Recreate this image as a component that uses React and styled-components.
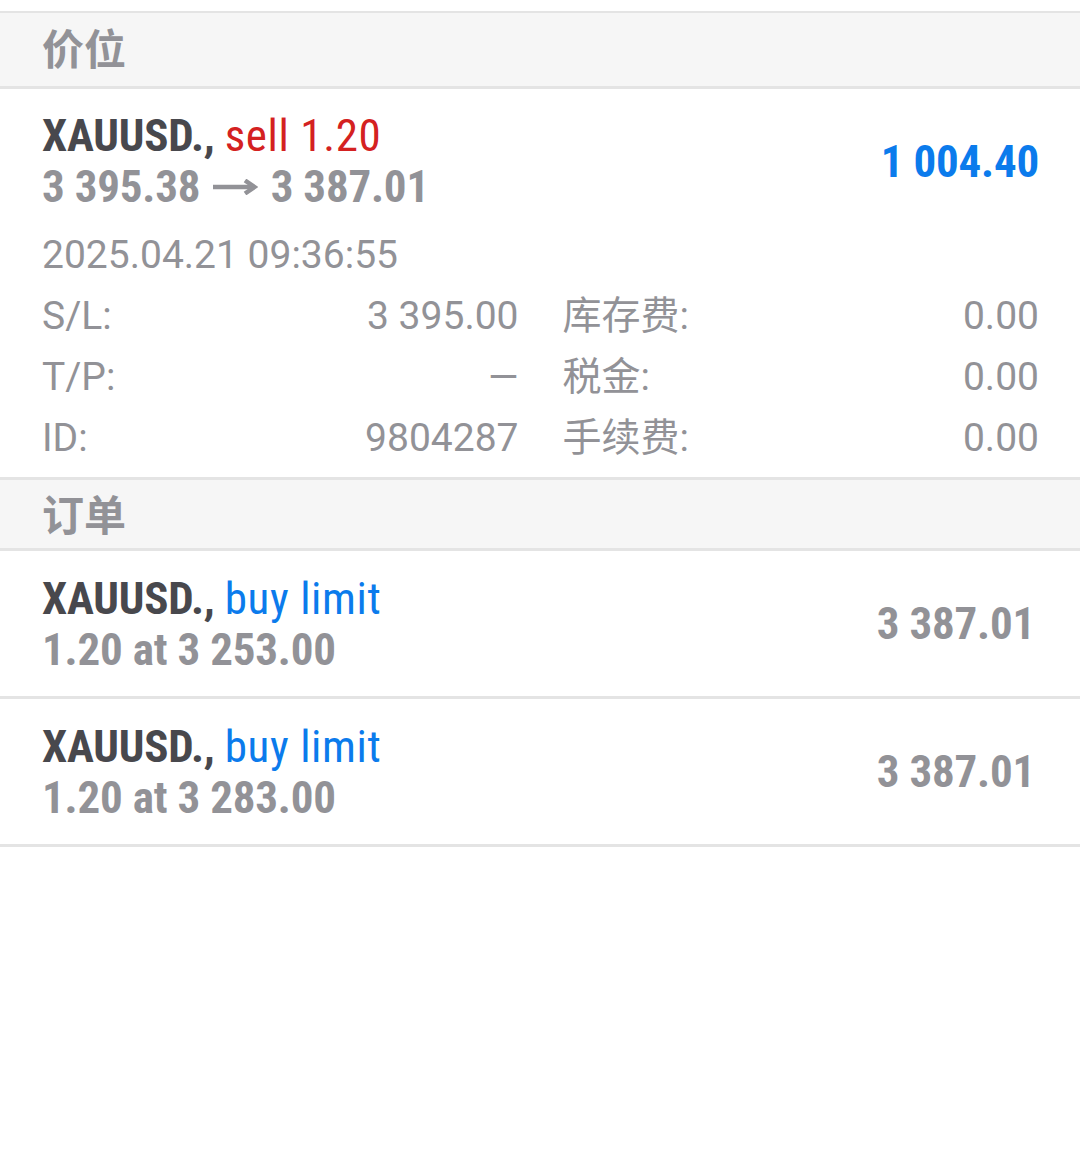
import React from "react";
import styled, { createGlobalStyle } from "styled-components";

const GlobalStyle = createGlobalStyle`
  html, body {
    margin: 0;
    padding: 0;
    background: #ffffff;
  }
  body {
    font-family: Roboto, "Noto Sans CJK SC", sans-serif;
    -webkit-font-smoothing: antialiased;
  }
`;

const C = {
  dark: "#48484d",
  gray: "#929297",
  red: "#d42121",
  blue: "#0b7bec",
  line: "#e4e4e4",
  headerBg: "#f6f6f6",
};

const Page = styled.div`
  width: 1080px;
  padding-top: 11px;
  background: #fff;
`;

const SectionHeader = styled.div`
  box-sizing: content-box;
  height: ${(p) => p.$h}px;
  border-top: ${(p) => p.$top}px solid ${C.line};
  border-bottom: 3px solid ${C.line};
  background: ${C.headerBg};
  padding: 0 42px ${(p) => p.$pb}px;
  display: flex;
  align-items: center;
  font-family: "Noto Sans CJK SC", sans-serif;
  font-weight: 700;
  font-size: 42px;
  line-height: 50px;
  color: ${C.gray};
`;

const PositionRow = styled.div`
  padding: 21px 41px 8px 42px;
`;

const TopBlock = styled.div`
  display: flex;
  align-items: center;
  justify-content: space-between;
`;

const Lines = styled.div`
  display: flex;
  flex-direction: column;
`;

const Condensed = styled.div`
  height: 51px;
  font-family: Roboto, sans-serif;
  font-stretch: 75%;
  font-weight: 700;
  font-size: 45px;
  letter-spacing: -0.2px;
  line-height: 51px;
  white-space: nowrap;
  color: ${(p) => p.$color || C.gray};
`;

const Symbol = styled.span`
  color: ${C.dark};
  font-weight: 700;
`;

const Side = styled.span`
  color: ${(p) => p.$color};
  font-weight: 400;
  letter-spacing: 0.6px;
`;

const Amount = styled(Condensed)`
  text-align: right;
`;

const ArrowSvg = styled.svg`
  display: inline-block;
  vertical-align: 7px;
  width: 46px;
  height: 16px;
  margin: 0 2px;
`;

const Arrow = () => (
  <ArrowSvg viewBox="0 0 46 16" fill="none" stroke={C.gray} strokeWidth="4.5">
    <path d="M1 8 H42" />
    <path d="M33 1.5 L42.5 8 L33 14.5" strokeLinejoin="miter" />
  </ArrowSvg>
);

const DateLine = styled.div`
  margin-top: 14px;
  height: 58px;
  font-size: 39px;
  line-height: 58px;
  color: ${C.gray};
`;

const DetailGrid = styled.div`
  margin-top: 2px;
  display: grid;
  grid-template-columns: 1fr 1fr;
  grid-auto-rows: 61px;
  column-gap: 44px;
`;

const Cell = styled.div`
  height: 61px;
  display: flex;
  justify-content: space-between;
  font-size: 39px;
  line-height: 61px;
  color: ${C.gray};
  white-space: nowrap;
  overflow: hidden;
`;

const Label = styled.span`
  font-family: Roboto, "Noto Sans CJK SC", sans-serif;
`;

const Value = styled.span``;

const OrderRow = styled.div`
  box-sizing: content-box;
  height: 145px;
  border-bottom: 3px solid ${C.line};
  padding: 0 45px 0 42px;
  display: flex;
  align-items: center;
  justify-content: space-between;
`;

const details = [
  ["S/L:", "3 395.00", "库存费:", "0.00"],
  ["T/P:", "—", "税金:", "0.00"],
  ["ID:", "9804287", "手续费:", "0.00"],
];

const orders = [
  { price: "3 253.00", current: "3 387.01" },
  { price: "3 283.00", current: "3 387.01" },
];

export default function App() {
  return (
    <>
      <GlobalStyle />
      <Page>
        <SectionHeader $h={68} $pb={5} $top={2}>价位</SectionHeader>
        <PositionRow>
          <TopBlock>
            <Lines>
              <Condensed>
                <Symbol>XAUUSD.,</Symbol> <Side $color={C.red}>sell 1.20</Side>
              </Condensed>
              <Condensed>
                3 395.38 <Arrow /> 3 387.01
              </Condensed>
            </Lines>
            <Amount $color={C.blue}>1 004.40</Amount>
          </TopBlock>
          <DateLine>2025.04.21 09:36:55</DateLine>
          <DetailGrid>
            {details.map((d) => (
              <React.Fragment key={d[0]}>
                <Cell>
                  <Label>{d[0]}</Label>
                  <Value>{d[1]}</Value>
                </Cell>
                <Cell>
                  <Label>{d[2]}</Label>
                  <Value>{d[3]}</Value>
                </Cell>
              </React.Fragment>
            ))}
          </DetailGrid>
        </PositionRow>
        <SectionHeader $h={65} $pb={3} $top={3}>订单</SectionHeader>
        {orders.map((o, i) => (
          <OrderRow key={i}>
            <Lines>
              <Condensed>
                <Symbol>XAUUSD.,</Symbol> <Side $color={C.blue}>buy limit</Side>
              </Condensed>
              <Condensed>1.20 at {o.price}</Condensed>
            </Lines>
            <Amount>{o.current}</Amount>
          </OrderRow>
        ))}
      </Page>
    </>
  );
}
